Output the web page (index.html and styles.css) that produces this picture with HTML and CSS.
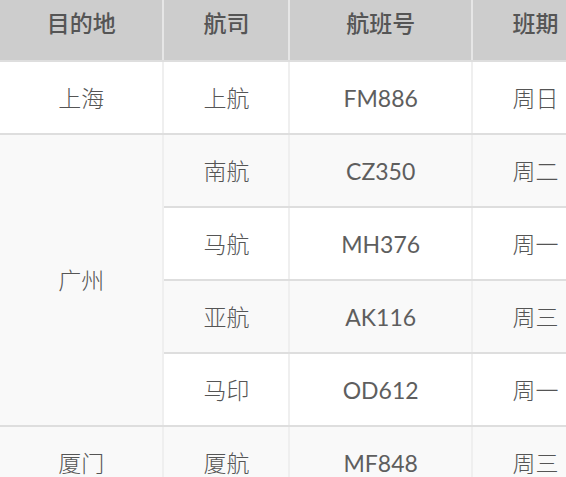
FILE: index.html
```html
<!DOCTYPE html>
<html lang="zh">
<head>
<meta charset="utf-8">
<title>航班表</title>
<link rel="stylesheet" href="styles.css">
</head>
<body>
<table class="flights">
  <thead>
    <tr>
      <th class="c1">目的地</th>
      <th class="c2">航司</th>
      <th class="c3">航班号</th>
      <th class="c4">班期</th>
    </tr>
  </thead>
  <tbody>
    <tr>
      <td>上海</td>
      <td>上航</td>
      <td class="code">FM886</td>
      <td>周日</td>
    </tr>
    <tr>
      <td rowspan="4">广州</td>
      <td>南航</td>
      <td class="code">CZ350</td>
      <td>周二</td>
    </tr>
    <tr>
      <td>马航</td>
      <td class="code">MH376</td>
      <td>周一</td>
    </tr>
    <tr>
      <td>亚航</td>
      <td class="code">AK116</td>
      <td>周三</td>
    </tr>
    <tr>
      <td>马印</td>
      <td class="code">OD612</td>
      <td>周一</td>
    </tr>
    <tr>
      <td>厦门</td>
      <td>厦航</td>
      <td class="code">MF848</td>
      <td>周三</td>
    </tr>
  </tbody>
</table>
</body>
</html>
```

FILE: styles.css
```css
html, body {
  margin: 0;
  padding: 0;
  overflow: hidden;
  background: #ffffff;
}

.flights {
  border-collapse: collapse;
  table-layout: fixed;
  width: 600px;
  font-family: Lato, "Noto Sans CJK SC", sans-serif;
  font-size: 23px;
  color: #555555;
}

.flights .c1 { width: 162px; }
.flights .c2 { width: 125px; }
.flights .c3 { width: 181px; }
.flights .c4 { width: 126px; }

.flights th {
  background: #cdcdcd;
  color: #555555;
  font-weight: 500;
  height: 61px;
  box-sizing: border-box;
  padding: 0 0 20px;
  line-height: 34px;
  text-align: center;
  vertical-align: bottom;
  border-right: 2px solid #e6e6e6;
  border-bottom: 2px solid #dedede;
}

.flights td {
  height: 73px;
  box-sizing: border-box;
  padding: 0;
  line-height: 34px;
  font-weight: 300;
  color: #555555;
  text-align: center;
  vertical-align: middle;
  border-right: 2px solid #efefef;
  border-bottom: 2px solid #dedede;
}

.flights td.code {
  font-weight: 400;
  color: #5e5e5e;
}

.flights tbody tr:nth-child(even) td {
  background: #f9f9f9;
}
```
